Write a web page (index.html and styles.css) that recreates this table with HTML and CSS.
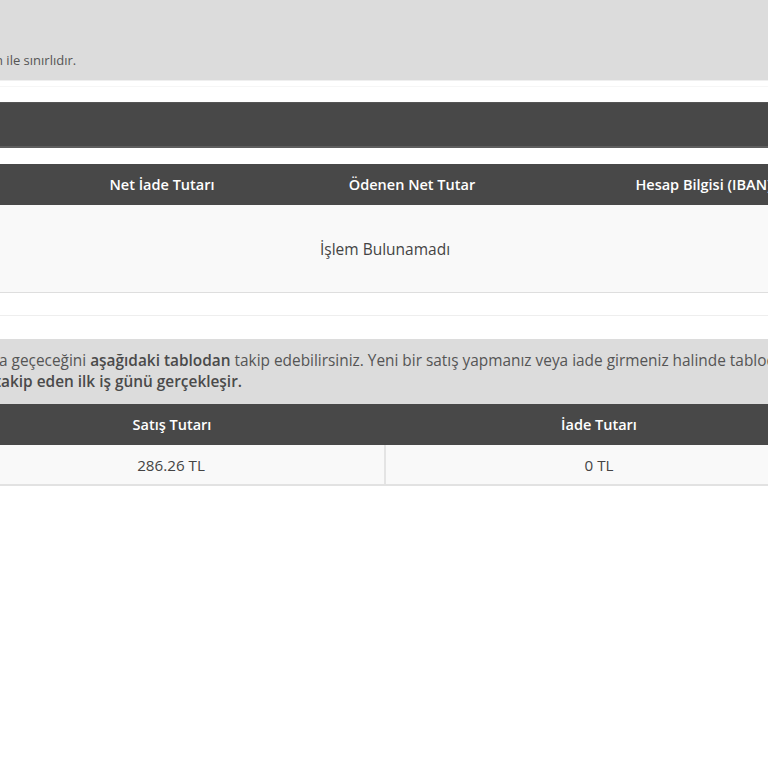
FILE: index.html
```
<!DOCTYPE html>
<html lang="tr">
<head>
<meta charset="utf-8">
<title>İade</title>
<link rel="stylesheet" href="styles.css">
</head>
<body>
<div class="viewport">
  <div class="page">
    <div class="notice notice-top">
      <p class="notice-line">n ile sınırlıdır.</p>
    </div>
    <div class="gap-top"></div>
    <div class="title-bar"></div>

    <div class="table table-refund">
      <div class="thead thead-refund">
        <div class="th"></div>
        <div class="th">Net İade Tutarı</div>
        <div class="th">Ödenen Net Tutar</div>
        <div class="th">Hesap Bilgisi (IBAN)</div>
      </div>
      <div class="empty-row">İşlem Bulunamadı</div>
    </div>

    <div class="spacer"></div>

    <div class="notice notice-info">
      <p class="info-text"><span class="line-1">a geçeceğini <b>aşağıdaki tablodan</b> takip edebilirsiniz. Yeni bir satış yapmanız veya iade girmeniz halinde tablodaki tutarlar güncellenir.</span><br><b>takip eden ilk iş günü gerçekleşir.</b></p>
    </div>

    <div class="table table-sales">
      <div class="thead thead-sales">
        <div class="th">Satış Tutarı</div>
        <div class="th">İade Tutarı</div>
      </div>
      <div class="tbody-row">
        <div class="td td-divider">286.26 TL</div>
        <div class="td">0 TL</div>
      </div>
    </div>
  </div>
</div>
</body>
</html>
```

FILE: styles.css
```
html, body {
  margin: 0;
  padding: 0;
  background: #ffffff;
}

body {
  font-family: "Open Sans", "Noto Sans", sans-serif;
  color: #444;
}

.viewport {
  width: 768px;
  height: 768px;
  overflow: hidden;
}

.page {
  width: 854px;
  margin-left: -42px;
}

.notice {
  background: #dcdcdc;
  color: #555;
}

.notice-top {
  height: 80px;
  box-sizing: border-box;
  display: flex;
  align-items: flex-end;
  padding: 0 0 11px 37px;
  font-size: 13px;
  line-height: 18px;
}

.notice-line {
  margin: 0;
  white-space: nowrap;
}

.gap-top {
  height: 22px;
  border-top: 1px solid #efefef;
  box-sizing: border-box;
  background: linear-gradient(#fff 0, #fff 5px, #f6f6f6 5px, #f6f6f6 6px, #fff 6px);
}

.title-bar {
  height: 46px;
  box-sizing: border-box;
  background: #484848;
  border-top: 1px solid #555;
  border-bottom: 2px solid #5e5e5e;
}

.table-refund {
  margin-top: 16px;
}

.thead {
  display: grid;
  background: #484848;
  color: #fff;
  font-size: 14.5px;
  font-weight: 600;
  height: 41px;
  align-items: center;
}

.thead-refund {
  grid-template-columns: 79px 250px 250px 333px;
}

.th {
  text-align: center;
  white-space: nowrap;
}

.empty-row {
  height: 88px;
  box-sizing: border-box;
  background: #f9f9f9;
  border-bottom: 1px solid #dedede;
  display: flex;
  align-items: center;
  justify-content: center;
  font-size: 15.5px;
  color: #444;
}

.spacer {
  height: 46px;
  box-sizing: border-box;
  background: linear-gradient(#fff 0, #fff 22px, #eeeeee 22px, #eeeeee 23px, #fff 23px);
}

.notice-info {
  height: 65px;
  box-sizing: border-box;
  padding: 11px 0 0 37px;
  font-size: 15.4px;
  line-height: 21px;
}

.info-text {
  margin: 0;
  white-space: nowrap;
}

.info-text b {
  font-weight: 600;
  color: #4a4a4a;
}

.line-1 {
  padding-left: 4px;
}

.thead-sales {
  grid-template-columns: 428px 426px;
}

.tbody-row {
  display: grid;
  grid-template-columns: 428px 426px;
  height: 41px;
  box-sizing: border-box;
  background: #f9f9f9;
  border-bottom: 2px solid #e2e2e2;
}

.td {
  display: flex;
  align-items: center;
  justify-content: center;
  font-size: 15.2px;
  color: #444;
}

.td-divider {
  border-right: 2px solid #e4e4e4;
}
```
